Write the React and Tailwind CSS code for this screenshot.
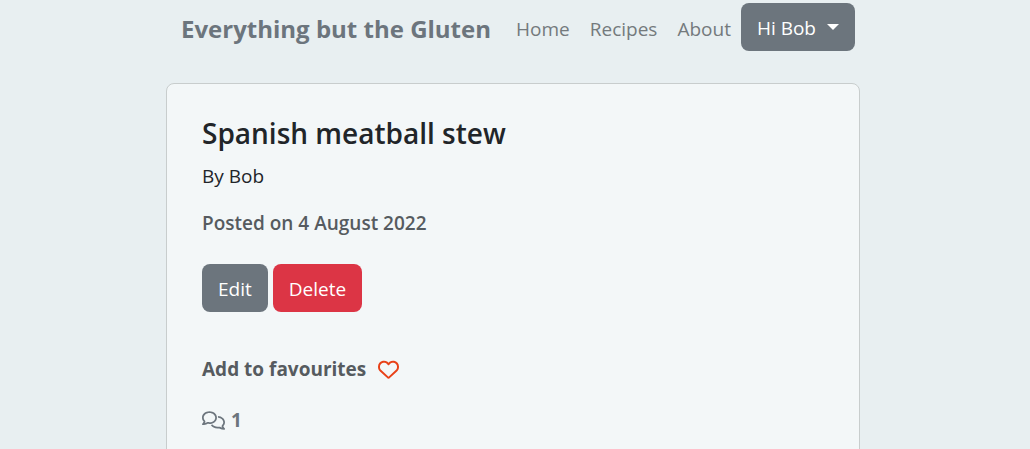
import { FaRegComments, FaRegHeart } from "react-icons/fa6";

const links = ["Home", "Recipes", "About"];

function Header() {
  return (
    <header className="mx-auto flex w-full max-w-[694px] items-center justify-between pt-[3px] pr-[5px] pl-[15px]">
      <a href="#home" className="pt-[3px] text-2xl font-bold whitespace-nowrap text-[#6c757d]">
        Everything but the Gluten
      </a>
      <nav className="flex items-center">
        {links.map((label) => (
          <a key={label} href={"#" + label.toLowerCase()} className="px-[10px] pt-[3px] text-[19px] leading-[30px] text-[#747a7d]">
            {label}
          </a>
        ))}
        <button type="button" className="flex h-12 items-center gap-[11px] rounded-lg bg-[#6c757d] px-4 pt-[2px] text-[19px] whitespace-nowrap text-white">
          Hi Bob
          <span className="mb-[2px] border-x-6 border-t-6 border-x-transparent border-t-white" />
        </button>
      </nav>
    </header>
  );
}

export default function App() {
  return (
    <div className="min-h-screen bg-[#e8eff1] pr-1 font-['Open_Sans','Noto_Sans',sans-serif] text-[#212529]">
      <Header />
      <main className="mx-auto mt-8 min-h-[480px] w-full max-w-[694px] rounded-lg border border-[#c8cdcd] bg-[#f3f7f8] px-[35px] pt-[31px]">
        <h1 className="text-[28px] leading-[36px] font-semibold">Spanish meatball stew</h1>
        <p className="mt-[10px] text-[19px] leading-[30px]">By Bob</p>
        <p className="mt-[17px] text-[19px] leading-[30px] font-semibold text-[#565b5f]">Posted on 4 August 2022</p>
        <div className="mt-[26px] flex gap-[5px]">
          <button type="button" className="h-12 rounded-lg bg-[#6c757d] px-4 pt-[2px] text-[19px] text-white">Edit</button>
          <button type="button" className="h-12 rounded-lg bg-[#dc3545] px-4 pt-[2px] text-[19px] text-white">Delete</button>
        </div>
        <div className="mt-[42px] flex h-[30px] items-center gap-3 text-[19px] font-bold text-[#565b5f]">
          Add to favourites
          <button type="button" aria-label="Add to favourites" className="text-[#e84118]">
            <FaRegHeart size={21} />
          </button>
        </div>
        <div className="mt-[21px] flex h-[30px] items-center gap-[6px] text-[19px] font-bold text-[#6c757d]">
          <FaRegComments size={23} />
          1
        </div>
      </main>
    </div>
  );
}
